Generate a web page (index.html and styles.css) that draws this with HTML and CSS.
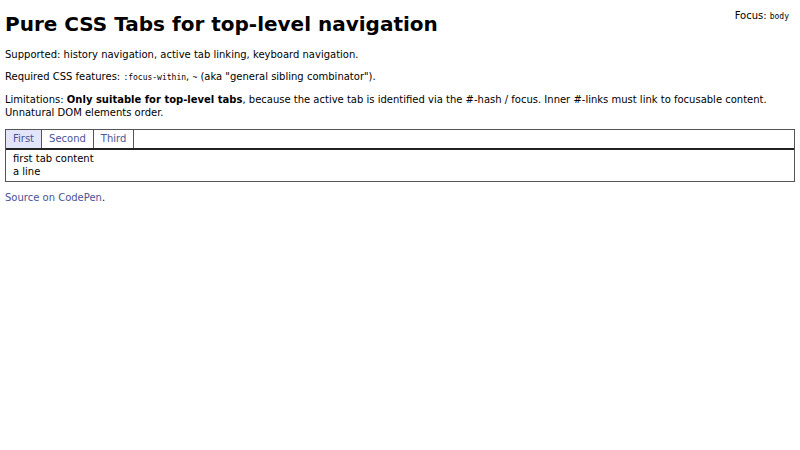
FILE: index.html
```html
<!DOCTYPE html>
<html>
<head>
<meta charset="utf-8">
<title>Pure CSS Tabs</title>
<link rel="stylesheet" href="styles.css">
</head>
<body>
<div class="focus">Focus: <code>body</code></div>
<h1>Pure CSS Tabs for top-level navigation</h1>
<p>Supported: history navigation, active tab linking, keyboard navigation.</p>
<p>Required CSS features: <code>:focus-within</code>, <code>~</code> (aka "general sibling combinator").</p>
<p>Limitations: <strong>Only suitable for top-level tabs</strong>, because the active tab is identified via the #-hash / focus. Inner #-links must link to focusable content. Unnatural DOM elements order.</p>
<div class="tabs">
  <nav class="tab-bar">
    <a class="tab active" href="#first">First</a>
    <a class="tab" href="#second">Second</a>
    <a class="tab" href="#third">Third</a>
  </nav>
  <div class="panel">first tab content<br>a line</div>
</div>
<p><a class="link" href="#">Source on CodePen</a>.</p>
</body>
</html>
```
FILE: styles.css
```css
body {
  margin: 5px;
  font-family: "DejaVu Sans", sans-serif;
  font-size: 10px;
  line-height: 12.5px;
  color: #000;
  background: #fff;
}
h1 {
  font-size: 20px;
  line-height: normal;
  margin: 7px 0 13px;
}
p {
  margin: 0 0 9.5px;
}
code {
  font-family: "DejaVu Sans Mono", monospace;
  font-size: 8px;
}
.focus {
  float: right;
  margin-top: 5px;
  margin-right: 6px;
}
.tabs {
  border: 1px solid #555;
  margin-bottom: 9.5px;
}
.tab-bar {
  display: flex;
  border-bottom: 2px solid #222;
}
.tab {
  padding: 3px 7px 2.5px;
  border-right: 1px solid #555;
  color: #4a5496;
  text-decoration: none;
}
.tab.active {
  background: #e2e4fa;
}
.panel {
  padding: 3.5px 7px 3px;
}
.link {
  color: #4a5496;
  text-decoration: none;
}
```
